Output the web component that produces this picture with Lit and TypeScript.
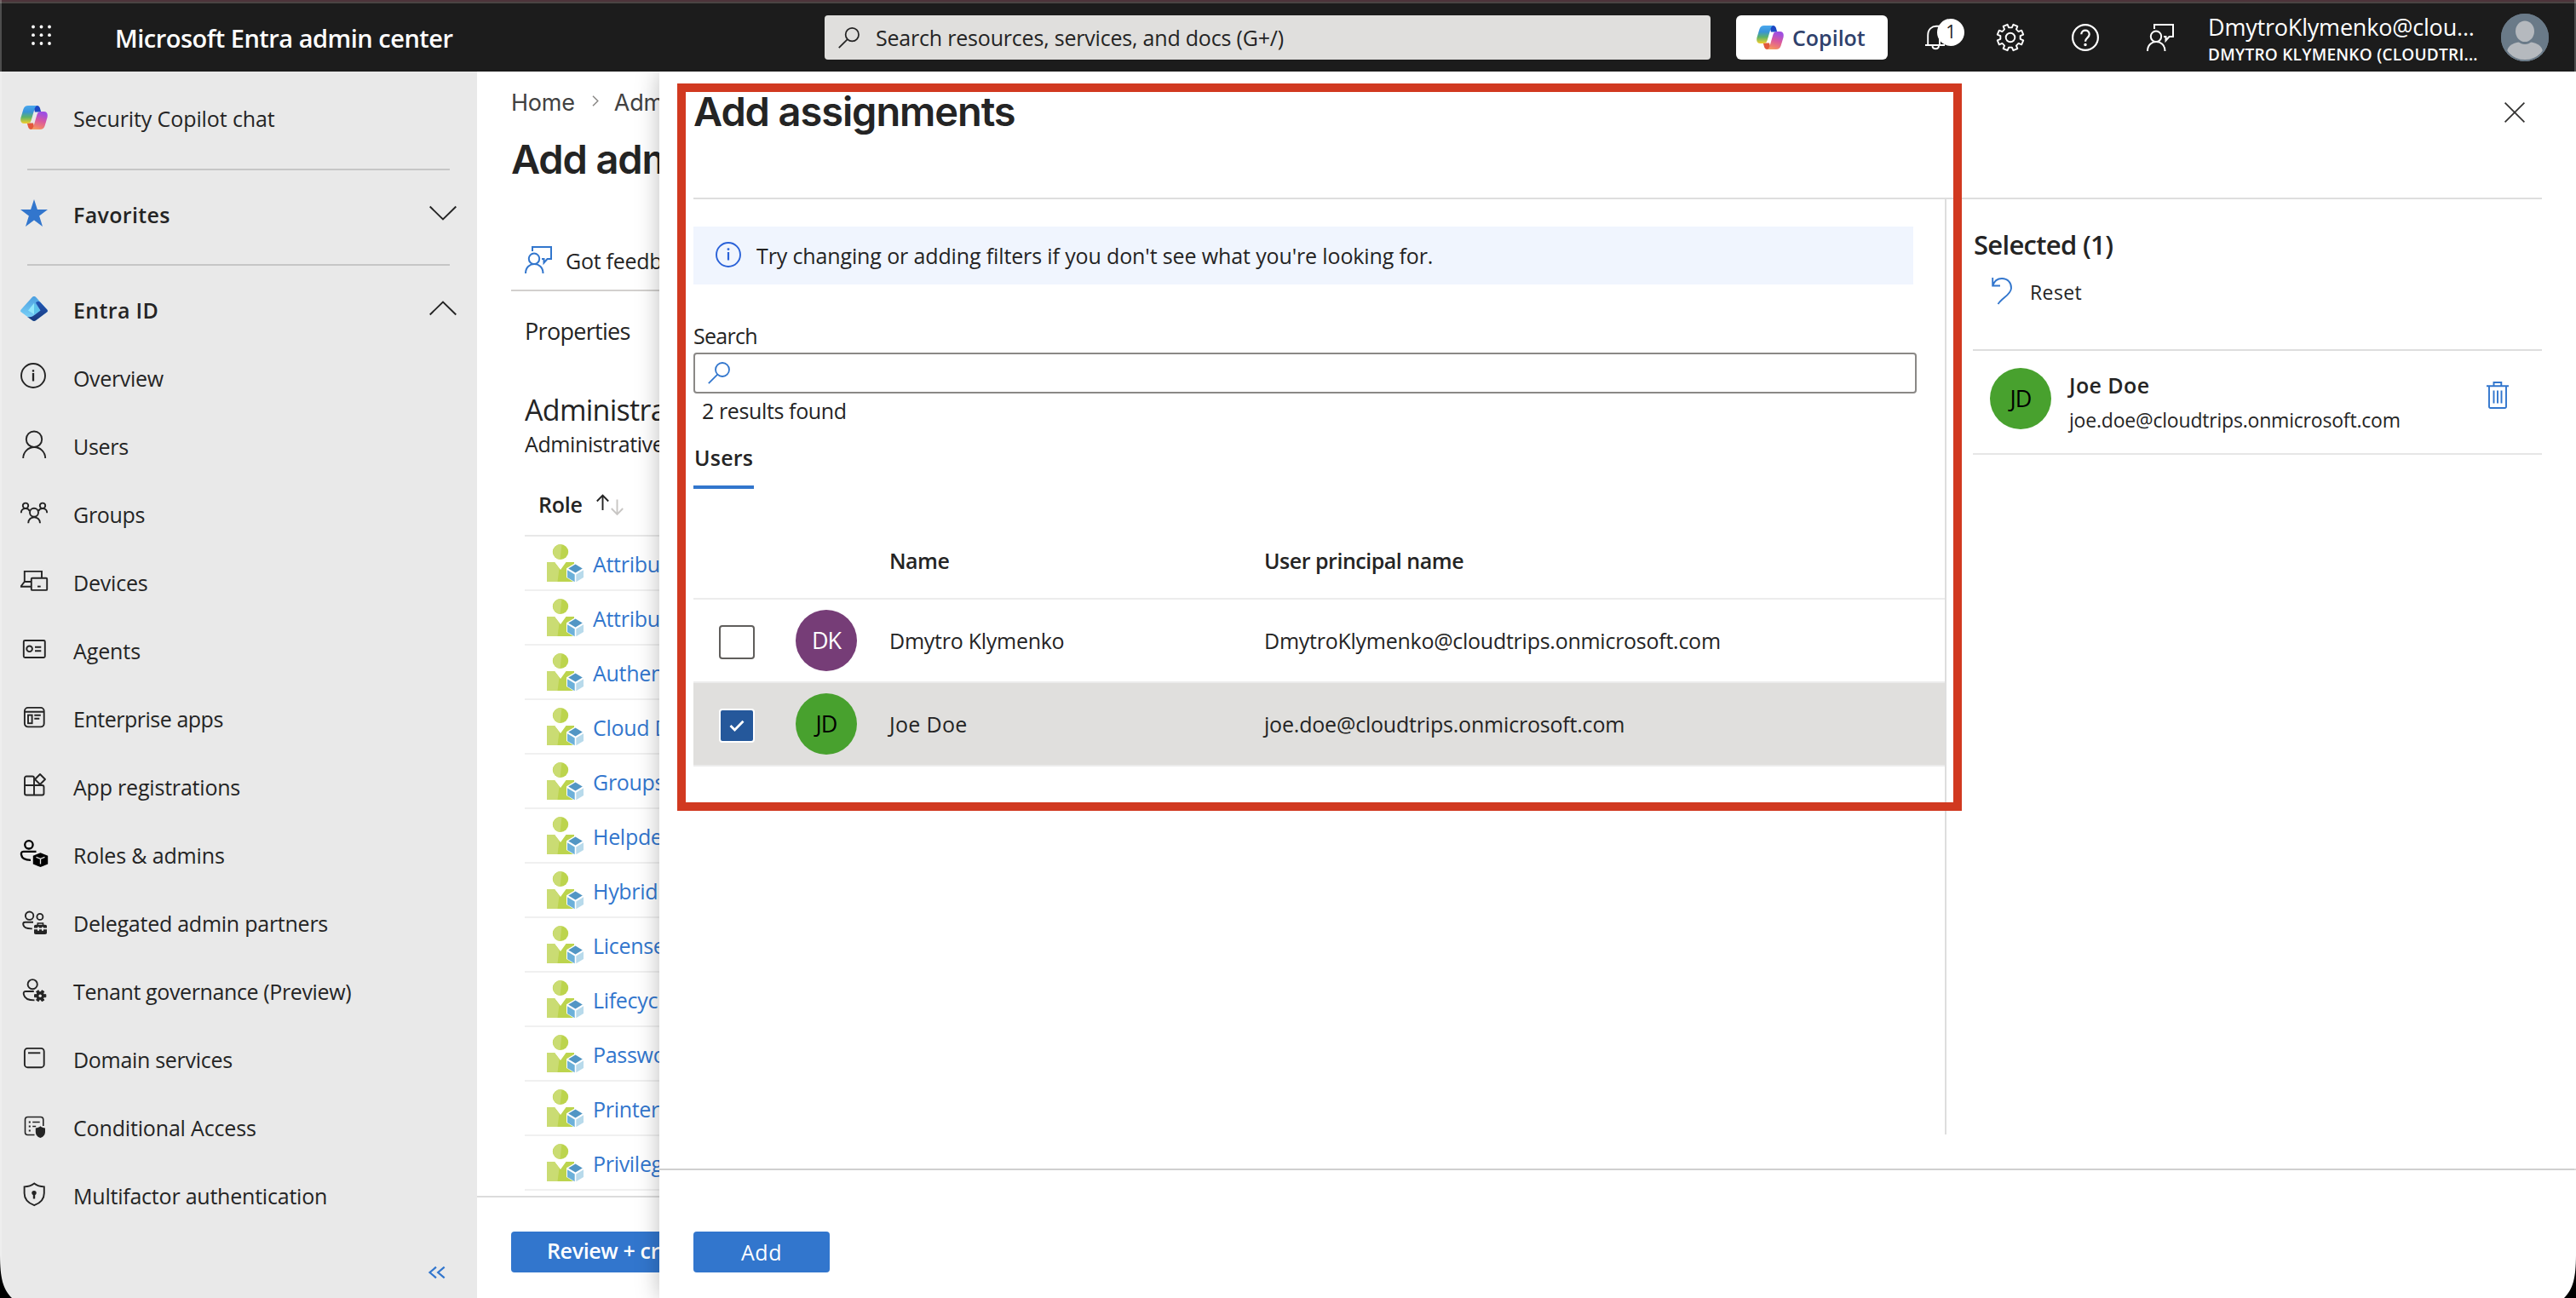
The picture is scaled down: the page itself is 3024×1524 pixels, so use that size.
import { LitElement, html, svg, css } from "lit";
import type { TemplateResult } from "lit";
import { customElement } from "lit/decorators.js";
import { styleMap } from "lit/directives/style-map.js";

/* ---------- icon helpers ---------- */

const icon = (w: number, h: number, body: unknown, cls = "") =>
  html`<svg class="icon ${cls}" width=${w} height=${h} viewBox="0 0 ${w} ${h}">${body}</svg>`;

/** Outline of a cog: `teeth` teeth between the root and outer radius. */
function cog(cx: number, cy: number, outer: number, root: number, teeth: number, phase: number): string {
  const pts: string[] = [];
  const step = 360 / teeth;
  for (let i = 0; i < teeth; i++) {
    const a = phase + i * step;
    const spec: [number, number][] = [
      [a - step * 0.3, root],
      [a - step * 0.22, outer],
      [a + step * 0.22, outer],
      [a + step * 0.3, root],
    ];
    for (const [deg, r] of spec) {
      const t = (deg * Math.PI) / 180;
      pts.push(`${(cx + r * Math.sin(t)).toFixed(2)} ${(cy - r * Math.cos(t)).toFixed(2)}`);
    }
  }
  return `M${pts.join("L")}Z`;
}

const copilotLogo = (id: string) =>
  icon(32, 28, svg`
    <defs>
      <linearGradient id="${id}-a" x1="0" y1="0" x2="0" y2="1">
        <stop offset="0" stop-color="#4aa8ee"/><stop offset=".35" stop-color="#3793d8"/>
        <stop offset=".65" stop-color="#5fb367"/><stop offset="1" stop-color="#f4cf2c"/>
      </linearGradient>
      <linearGradient id="${id}-b" x1=".3" y1="0" x2="0" y2="1">
        <stop offset="0" stop-color="#a04fe0"/><stop offset=".4" stop-color="#d9589f"/>
        <stop offset=".75" stop-color="#f0806f"/><stop offset="1" stop-color="#f6b05c"/>
      </linearGradient>
    </defs>
    <path d="M15 0h4.500c2 0 3 1.300 3.600 3.500L24.200 7.500H17z" fill="#1c48c4"/>
    <path d="M17 28h-4.500c-2 0-3-1.300-3.600-3.500L7.800 20.500H15z" fill="#e2593c"/>
    <path d="M9 0H20.500C18 0 17 2 16.200 5L12.700 17C11.800 20 10.500 21 8 21H4C1 21-.5 18 .5 14L3.500 4C4.500 1.500 6 0 9 0z" fill="url(#${id}-a)"/>
    <path d="M23 28H11.500C14 28 15 26 15.800 23L19.300 11C20.200 8 21.500 7 24 7H28C31 7 32.500 10 31.500 14L28.500 24C27.500 26.500 26 28 23 28z" fill="url(#${id}-b)"/>`);

const star = icon(32, 32, svg`<path d="M16 0l3.900 11.900H32l-9.900 7.500L26 32l-10-7.600L6 32l3.900-12.600L0 11.900h12.100z" fill="#3276cd"/>`);

const entraLogo = icon(32, 29, svg`
  <defs>
    <linearGradient id="en-l" x1="0" y1="0" x2="0" y2="1"><stop offset="0" stop-color="#4c9fe0"/><stop offset="1" stop-color="#7fd8fb"/></linearGradient>
    <linearGradient id="en-r" x1="0" y1="0" x2="0" y2="1"><stop offset="0" stop-color="#2257b5"/><stop offset="1" stop-color="#1a3a7d"/></linearGradient>
  </defs>
  <path d="M16 0c1 0 1.800.5 2.500 1.300L31.300 15.600c1 1.200.8 2.300-.3 3L18 28.200c-1.300.9-2.700.9-4 0L1 18.600c-1.100-.7-1.300-1.800-.3-3L13.500 1.300C14.200.5 15 0 16 0z" fill="url(#en-l)"/>
  <path d="M18 7.500c2-2.300 4.500-1.500 6 .2l7.300 7.900c1 1.200.8 2.300-.3 3L18 28.200c-1.300.9-2.700.9-4 0l-6-4.300c5 1 7.500-1.400 9-2.500l6.500-5z" fill="url(#en-r)"/>
  <path d="M16 8l7 8.400-7 4.600-7-4.600z" fill="#5cc4ea"/><path d="M16 8v13l-7-4.600z" fill="#90e6fb"/>`);

const feedback = (stroke: string) =>
  icon(32, 32, svg`<g fill="none" stroke=${stroke} stroke-width="2">
    <circle cx="11" cy="14.800" r="6.200"/><path d="M1 32c0-14.600 20.500-14.600 20.500 0"/>
    <path d="M9 6V1h22v14h-4.500l-4 4.500V15H20"/></g>`);

const chevron = (up: boolean) =>
  icon(32, 18, svg`<path d=${up ? "M.7 16.500L16 1.500l15.300 15" : "M.7 1.500L16 16.500l15.300-15"} fill="none" stroke="#242424" stroke-width="1.900"/>`);

const magnifier = (stroke: string, s: number) =>
  html`<svg class="icon" width=${s} height=${s} viewBox="0 0 26 26"><g fill="none" stroke=${stroke} stroke-width="1.800">
    <circle cx="17" cy="9" r="8"/><path d="M11.300 14.700L.8 25.200"/></g></svg>`;

const infoIcon = (stroke: string, s: number) =>
  html`<svg class="icon" width=${s} height=${s} viewBox="0 0 30 30"><circle cx="15" cy="15" r="14" fill="none" stroke=${stroke} stroke-width="1.900"/>
    <path d="M15 12v9.500" stroke=${stroke} stroke-width="2.200"/><circle cx="15" cy="8.600" r="1.400" fill=${stroke}/></svg>`;

const roleIcon = icon(43, 44, svg`
  <ellipse cx="16" cy="9" rx="9.200" ry="9" fill="#bcd44d"/>
  <path d="M17.500.1A9.200 9 0 1 0 15.500 18z" fill="#cadc73"/>
  <path d="M0 21h9l7 9 6.500-9H32v23H0z" fill="#bcd44d"/>
  <path d="M0 21h9l5.500 7.500L12.500 44H0z" fill="#cadc73"/>
  <path d="M33.500 22L44 28.300V39l-10.500 6.500L23 39V28.300z" fill="#fff"/>
  <path d="M33.500 23.500l8.300 5-8.300 5-8.300-5z" fill="#5296c4"/>
  <path d="M24 30.200l8.700 5.200V44.300L24 39z" fill="#6cb0d9"/>
  <path d="M43 30.200l-8.700 5.200V44.300L43 39z" fill="#b8daeb"/>`);

/* ---------- navigation data ---------- */

const k = "#242424";
const nav = (body: TemplateResult | unknown) =>
  icon(32, 32, svg`<g fill="none" stroke=${k} stroke-width="1.900">${body}</g>`, "nav-icon");

interface NavItem { label: string; tracking: number; glyph: TemplateResult; }

const NAV: NavItem[] = [
  { label: "Overview", tracking: -0.34, glyph: nav(svg`<circle cx="15" cy="13" r="14"/><path d="M15 10v9.500" stroke-width="2.300"/><path d="M15 6.200v2.400" stroke-width="2.300"/>`) },
  { label: "Users", tracking: -0.3, glyph: nav(svg`<circle cx="16" cy="7.700" r="9.200"/><path d="M3.200 30A12.800 12.800 0 0 1 29.200 30"/>`) },
  { label: "Groups", tracking: -0.3, glyph: nav(svg`<circle cx="16" cy="13.800" r="5"/><path d="M9.200 26.300C9.200 17 23 17 23 26.300"/>
      <circle cx="6" cy="5.800" r="3.200"/><circle cx="26" cy="5.800" r="3.200"/><path d="M.8 14.200C.8 8.500 8.500 7.200 10.800 12M31.200 14.200C31.200 8.500 23.500 7.200 21.200 12"/>`) },
  { label: "Devices", tracking: -0.2, glyph: nav(svg`<path d="M4.800 15V2.900H25v7.500M12.800 15H4.800L.9 20v.7H12.800"/><rect x="12.800" y="10.700" width="18.400" height="14.200" rx="1"/><path d="M20 20.600h3.700"/>`) },
  { label: "Agents", tracking: -0.1, glyph: nav(svg`<rect x="3.800" y="4" width="25" height="20" rx="1.500"/><circle cx="10.600" cy="13.800" r="3.300"/><path d="M17 11.700h7.300M17 16.200h7.300"/>`) },
  { label: "Enterprise apps", tracking: -0.48, glyph: nav(svg`<rect x="4.900" y="2.900" width="22.800" height="22.500" rx="4"/><path d="M5 7.800h22.600M16.300 11.800h7.500M16.300 15.800h6"/><rect x="9" y="11.600" width="4.600" height="9.600"/>`) },
  { label: "App registrations", tracking: -0.2, glyph: nav(svg`<path d="M16 14V5.500a2 2 0 0 0-2-2H7a2 2 0 0 0-2 2V23.500a2 2 0 0 0 2 2H25.500a2 2 0 0 0 2-2V16a2 2 0 0 0-2-2H5M16 14V25.500"/><path d="M23 1l6 6-6 6-6-6z" stroke-linejoin="round"/>`) },
  { label: "Roles & admins", tracking: -0.15, glyph: nav(svg`<g stroke="#000" stroke-width="2.300"><circle cx="9.900" cy="3.800" r="4.700"/><path d="M18.500 11.800H3.500C.8 11.800.8 14 1 15.500 1.600 20 6 21.800 12 21.800"/></g>
      <path d="M23.500 13.200l8.700 3.600v9.800l-8.700 3.500-8.700-3.500v-9.800z" fill="#000" stroke="none"/><path d="M18.500 18.300l5 2 5-2M23.500 20.300v6.200" stroke="#e9e9e9" stroke-width="1.300"/>`) },
  { label: "Delegated admin partners", tracking: -0.25, glyph: nav(svg`<circle cx="10.600" cy="7.200" r="4.700"/><circle cx="22.900" cy="8.400" r="3.500"/><path d="M15 14.800H5.500c-2.500 0-2.400 1.500-2.200 3C4 21.500 8 22.600 13.800 22.400"/>
      <path d="M16 21.500v-2c0-1 .8-1.800 2-1.800h11c1.200 0 2 .8 2 1.800v2h-4v-1h-2v1h-3v-1h-2v1zM16 23.300h4v1.500h2v-1.500h3v1.500h2v-1.500h4v4c0 1-.8 1.700-2 1.700H18c-1.200 0-2-.7-2-1.700z" fill=${k} stroke="none"/><path d="M20.300 18v-2h6.200v2" stroke-width="1.600"/>`) },
  { label: "Tenant governance (Preview)", tracking: -0.38, glyph: nav(svg`<circle cx="14.200" cy="7.700" r="5.600"/><path d="M15.800 16H6C3.500 16 3.500 18 3.900 19.700 5 24.800 10.500 26.400 16.500 26.400"/>
      <path d=${cog(23.2, 21.2, 6.8, 4.600, 6, 30)} fill=${k} stroke=${k} stroke-width="1"/><circle cx="23.200" cy="21.200" r="1.700" fill="#e9e9e9" stroke="none"/>`) },
  { label: "Domain services", tracking: -0.3, glyph: nav(svg`<rect x="4.900" y="2.900" width="22.800" height="22.300" rx="3.500"/><path d="M9 8.300h14.300"/>`) },
  { label: "Conditional Access", tracking: -0.16, glyph: nav(svg`<path d="M26.800 14V6.500a3 3 0 0 0-3-3H8.500a3 3 0 0 0-3 3V21.500a3 3 0 0 0 3 3H16.500" stroke-width="1.600"/><path d="M14.200 9.500h8.500M14.200 14.500h4" stroke-width="1.600"/>
      <path d="M9.800 9.500h2M9.800 14.500h2M9.800 19.500h2" stroke-width="2"/><path d="M23.400 14.300c1.600 1.400 3.400 2 5.600 2.200v4.300c0 3.800-2.200 6-5.600 7.300-3.400-1.300-5.600-3.500-5.600-7.300v-4.300c2.200-.2 4-.8 5.600-2.200z" fill=${k} stroke="none"/>`) },
  { label: "Multifactor authentication", tracking: -0.22, glyph: nav(svg`<path d="M16.200 1.500C19.500 4 23.500 5.200 27.800 5.400V13C27.800 20 23.500 24.500 16.200 27.200 8.900 24.500 4.600 20 4.600 13V5.400C8.900 5.200 12.900 4 16.200 1.500z"/><circle cx="16" cy="12.600" r="2.700" fill=${k} stroke="none"/><path d="M16 13v6.500" stroke-width="2.400"/>`) },
];

const ROLES = [
  "Attribute", "Attribute", "Authen", "Cloud D", "Groups", "Helpde",
  "Hybrid", "License", "Lifecyc", "Passwo", "Printer", "Privileg",
];

interface Person { initials: string; name: string; upn: string; tone: string; selected: boolean; }

const PEOPLE: Person[] = [
  { initials: "DK", name: "Dmytro Klymenko", upn: "DmytroKlymenko@cloudtrips.onmicrosoft.com", tone: "purple", selected: false },
  { initials: "JD", name: "Joe Doe", upn: "joe.doe@cloudtrips.onmicrosoft.com", tone: "green", selected: true },
];

/* ---------- shared styles ---------- */

const base = css`
  :host { display: block; box-sizing: border-box; font-family: "Open Sans", "Noto Sans", sans-serif; font-size: 25px; line-height: 40px; letter-spacing: -0.26px; color: #242424; }
  * { box-sizing: border-box; }
  .icon { display: block; flex: none; overflow: visible; }
  .avatar { width: 72px; height: 72px; border-radius: 50%; display: flex; align-items: center; justify-content: center; font-size: 27px; letter-spacing: -1px; flex: none; }
  .purple { background: #763d77; color: #fff; }
  .green { background: #48a12e; color: #000; }
  .primary { height: 48px; border-radius: 4px; background: #3276cd; color: #fff; font-weight: 600; display: flex; align-items: center; white-space: nowrap; }
`;

/* ---------- top bar ---------- */

@customElement("top-bar")
export class TopBar extends LitElement {
  static styles = [base, css`
    :host { height: 84px; background: #1c1c1c; border-top: 2px solid #4d343a; color: #fff; }
    .bar { height: 82px; border-top: 2px solid #4a4443; display: flex; align-items: center; padding-left: 36px; }
    .title { width: 831px; padding-left: 75px; font-size: 29px; font-weight: 600; letter-spacing: -0.5px; padding-top: 2px; }
    .waffle { margin-top: -6px; }
    .brand { display: flex; align-items: center; width: 932px; }
    .search { width: 1040px; height: 52px; border-radius: 4px; background: #e0dfdd; color: #242424; display: flex; align-items: center; gap: 19px; padding-left: 16px; letter-spacing: -0.2px; }
    .copilot { width: 178px; height: 52px; margin-left: 30px; border-radius: 6px; background: #fff; color: #2f416c; font-weight: 600; letter-spacing: 0; display: flex; align-items: center; gap: 10px; padding-left: 24px; }
    .tools { display: flex; align-items: center; margin-left: 44px; gap: 56px; }
    .bell { position: relative; width: 46px; height: 32px; margin-right: -18px; }
    .badge { position: absolute; left: 14px; top: -6px; width: 32px; height: 32px; border-radius: 50%; background: #fff; color: #242424; font-size: 21px; line-height: 31px; text-align: center; }
    .user { margin-left: 40px; width: 344px; padding-top: 7px; }
    .mail { font-size: 27px; line-height: 32px; letter-spacing: -0.2px; }
    .tenant { font-size: 19px; font-weight: 600; line-height: 32px; letter-spacing: 0.25px; white-space: nowrap; }
  `];

  render() {
    const dots = [2, 11.5, 21].flatMap((x) => [1.5, 11.2, 21].map((y) => svg`<circle cx=${x + 1} cy=${y + 1} r="1.900" fill="#fff"/>`));
    return html`<div class="bar">
      <div class="brand">
        ${icon(24, 24, dots, "waffle")}
        <div class="title">Microsoft Entra admin center</div>
      </div>
      <div class="search">${magnifier("#242424", 25)}<span>Search resources, services, and docs (G+/)</span></div>
      <div class="copilot">${copilotLogo("top")}<span>Copilot</span></div>
      <div class="tools">
        <div class="bell">
          ${icon(46, 32, svg`<g fill="none" stroke="#fff" stroke-width="1.900"><path d="M3.200 25V13.500C3.200 6 8 2.800 13 2.800h4V25M0 25h23"/><path d="M8.500 25.500c0 5 7.500 5 7.500 0"/></g>`)}
          <div class="badge">1</div>
        </div>
        ${icon(32, 32, svg`<g fill="none" stroke="#fff" stroke-width="1.900" stroke-linejoin="round"><path d=${cog(16, 16, 15.600, 11.800, 8, 22.5)}/><circle cx="16" cy="16" r="5.300"/></g>`)}
        ${icon(32, 32, svg`<g fill="none" stroke="#fff" stroke-width="2.200"><circle cx="16" cy="16" r="14.900"/><path d="M11.300 12.300c0-6.200 9.400-6.200 9.400 0 0 4-4.700 4.200-4.700 8.500"/><circle cx="16" cy="24.500" r="1" fill="#fff" stroke-width="1.500"/></g>`)}
        ${feedback("#fff")}
      </div>
      <div class="user"><div class="mail">DmytroKlymenko@clou...</div><div class="tenant">DMYTRO KLYMENKO (CLOUDTRI...</div></div>
      ${icon(56, 56, svg`<clipPath id="face"><circle cx="28" cy="28" r="28"/></clipPath><g clip-path="url(#face)"><rect width="56" height="56" fill="#6a7a88"/>
        <path d="M7 56V46c0-9 8-13 21-13s21 4 21 13v10z" fill="#b5b9be"/><ellipse cx="28" cy="21.500" rx="12.500" ry="14.500" fill="#6a7a88"/><ellipse cx="28" cy="20.800" rx="11" ry="12.300" fill="#b5b9be"/></g>
        <circle cx="28" cy="28" r="27" fill="none" stroke="#6a7a88" stroke-width="2"/>`)}
    </div>`;
  }
}

/* ---------- left navigation ---------- */

@customElement("side-nav")
export class SideNav extends LitElement {
  static styles = [base, css`
    :host { width: 560px; flex: none; background: #e9e9e9; padding-top: 14px; }
    .row { height: 80px; display: flex; align-items: center; padding: 0 24px 0 24px; gap: 30px; }
    .top { height: 82px; letter-spacing: -0.1px; }
    .top .shift { margin-top: -2px; }
    .link span { margin-top: -1px; }
    .head { font-weight: 600; letter-spacing: 0.35px; }
    .head .grow { flex: 1; }
    .shift { margin-top: -4px; }
    hr { border: 0; height: 2px; background: #c6c6c6; margin: 18px 32px 12px; }
    .collapse { padding: 43px 0 0 503px; }
  `];

  render() {
    return html`
      <div class="row top"><div class="shift">${copilotLogo("nav")}</div><span>Security Copilot chat</span></div>
      <hr />
      <div class="row head"><div class="shift">${star}</div><span class="grow">Favorites</span><div class="shift">${chevron(false)}</div></div>
      <hr />
      <div class="row head"><div class="shift">${entraLogo}</div><span class="grow">Entra ID</span><div class="shift">${chevron(true)}</div></div>
      ${NAV.map((n) => html`<div class="row link">${n.glyph}<span style=${styleMap({ letterSpacing: `${n.tracking}px` })}>${n.label}</span></div>`)}
      <div class="collapse">${icon(20, 14, svg`<path d="M9 .7L1.500 7 9 13.300M18.700.7L11.200 7l7.500 6.300" fill="none" stroke="#3276cd" stroke-width="2.200"/>`)}</div>
    `;
  }
}

/* ---------- page behind the panel ---------- */

@customElement("role-page")
export class RolePage extends LitElement {
  static styles = [base, css`
    :host { width: 214px; flex: none; overflow: hidden; display: flex; flex-direction: column; background: #fff; white-space: nowrap; }
    .crumbs { margin: 17px 0 0 40px; font-family: Inter, sans-serif; font-size: 27px; letter-spacing: -0.2px; color: #424242; display: flex; overflow: hidden; }
    .crumbs .icon { margin: 11px 18px 0 20px; }
    h1 { margin: 16px 0 0 40px; font: 600 47px/60px Inter, sans-serif; letter-spacing: -1.15px; overflow: hidden; }
    .commands { margin: 55px 0 0 40px; padding-left: 16px; height: 70px; border-bottom: 2px solid #d2d0ce; display: flex; align-items: center; gap: 16px; overflow: hidden; }
    .commands .icon { margin-top: -3px; }
    .commands span { margin-top: -1px; }
    .tab { margin: 27px 0 0 56px; font-size: 27px; letter-spacing: -0.7px; }
    h2 { margin: 50px 0 0 56px; font-size: 34px; line-height: 44px; font-weight: 400; letter-spacing: -0.7px; overflow: hidden; }
    .note { margin-left: 56px; line-height: 36px; letter-spacing: -0.4px; overflow: hidden; }
    .table { margin: 17px 0 0 56px; height: 848px; overflow: hidden; }
    .th { height: 74px; padding-left: 16px; border-bottom: 2px solid #e8e8e8; font-weight: 600; display: flex; align-items: center; gap: 16px; }
    .th .icon { margin-top: 1px; }
    .tr { height: 64px; padding-left: 26px; border-bottom: 2px solid #f0f0f0; display: flex; align-items: center; gap: 11px; color: #3276cd; }
    .tr span { flex: 1; min-width: 0; padding-top: 2px; letter-spacing: -0.3px; overflow: hidden; }
    .foot { height: 120px; border-top: 2px solid #dcdcdc; padding: 40px 0 0 40px; overflow: hidden; }
    .primary { width: 280px; padding: 0 0 5px 42px; letter-spacing: -0.35px; }
  `];

  render() {
    return html`
      <div class="crumbs"><span>Home</span>${icon(8, 13, svg`<path d="M1 .7l5.800 5.800L1 12.300" fill="none" stroke="#8a8886" stroke-width="1.500"/>`)}<span>Adm</span></div>
      <h1>Add adm</h1>
      <div class="commands">${feedback("#3276cd")}<span>Got feedb</span></div>
      <div class="tab">Properties</div>
      <h2>Administra</h2>
      <div class="note">Administrative</div>
      <div class="table">
        <div class="th"><span>Role</span>${icon(34, 26, svg`<path d="M7.500 19V2M.8 8.500L7.500 1.500l6.700 7" fill="none" stroke="#242424" stroke-width="1.900"/><path d="M24.500 6.500V23.500M17.800 17l6.700 7 6.700-7" fill="none" stroke="#c8c6c4" stroke-width="1.900"/>`)}</div>
        ${ROLES.map((r) => html`<div class="tr">${roleIcon}<span>${r}</span></div>`)}
      </div>
      <div class="foot"><div class="primary">Review + cr</div></div>
    `;
  }
}

/* ---------- assignment panel ---------- */

@customElement("assign-panel")
export class AssignPanel extends LitElement {
  static styles = [base, css`
    :host { flex: 1; min-width: 0; z-index: 1; background: #fff; display: flex; flex-direction: column; box-shadow: 0 0 26px rgba(0, 0, 0, 0.26); }
    .head { height: 150px; margin: 0 40px; border-bottom: 2px solid #dedede; display: flex; justify-content: space-between; padding: 17px 20px 0 0; }
    h1 { margin: 0; font: 600 47px/60px Inter, sans-serif; letter-spacing: -1.1px; }
    .head .icon { margin-top: 19px; }
    .body { flex: 1; display: flex; margin: 0 40px; }
    .list { width: 1471px; height: 1098px; border-right: 2px solid #dedede; padding-top: 32px; }
    .info { width: 1432px; height: 68px; background: #f0f5fe; display: flex; align-items: center; gap: 18px; padding-left: 26px; letter-spacing: -0.13px; }
    .info .icon { margin-top: -3px; }
    .label { margin-top: 40px; letter-spacing: -0.7px; }
    .input { width: 1436px; height: 48px; border: 2px solid #8a8886; border-radius: 4px; display: flex; align-items: center; padding-left: 15px; }
    .count { padding-left: 10px; letter-spacing: -0.38px; }
    .tab { margin-top: 15px; width: 71px; padding: 0 0 13px 1px; border-bottom: 4px solid #3276cd; font-weight: 600; letter-spacing: 0.2px; }
    .row { display: grid; grid-template-columns: 120px 110px 440px 1fr; align-items: center; height: 98px; border-bottom: 2px solid #ececec; }
    .names { height: 130px; padding-top: 40px; font-weight: 600; letter-spacing: -0.48px; }
    .on { background: #e0dfdd; }
    .on span { letter-spacing: -0.2px; }
    .box { width: 42px; height: 40px; margin: 4px 0 0 30px; border: 2px solid #605e5c; border-radius: 4px; background: #fff; display: flex; align-items: center; justify-content: center; }
    .on .box { border-color: #fff; background: #25589b; }
    .on .name { letter-spacing: 0.3px; }
    .side { width: 699px; padding: 31px 0 0 31px; flex: none; }
    h2 { margin: 0; padding-left: 1px; font-size: 31px; line-height: 44px; font-weight: 600; letter-spacing: -0.7px; }
    .reset { margin: 12px 0 45px; height: 44px; display: flex; align-items: center; gap: 21px; padding-left: 22px; font-size: 23px; letter-spacing: 0.4px; }
    .reset .icon { margin-top: -3px; }
    .card { height: 124px; border-top: 2px solid #dedede; border-bottom: 2px solid #e6e6e6; display: flex; align-items: flex-start; padding: 20px 39px 0 20px; gap: 21px; }
    .who { flex: 1; }
    .who b { display: block; font-weight: 600; letter-spacing: 0.4px; }
    .who span { display: block; font-size: 23px; line-height: 42px; letter-spacing: -0.2px; }
    .card > .icon { margin-top: 16px; }
    .foot { height: 152px; border-top: 2px solid #cfcfcf; padding: 72px 0 0 40px; }
    .primary { width: 160px; justify-content: center; font-weight: 500; letter-spacing: 0.5px; }
  `];

  render() {
    return html`
      <div class="head">
        <h1>Add assignments</h1>
        ${icon(24, 24, svg`<path d="M.6.6l22.800 22.800M23.400.6L.6 23.400" stroke="#323130" stroke-width="1.700"/>`)}
      </div>
      <div class="body">
        <div class="list">
          <div class="info">${infoIcon("#2a62d8", 30)}<span>Try changing or adding filters if you don't see what you're looking for.</span></div>
          <div class="label">Search</div>
          <div class="input">${magnifier("#3276cd", 26)}</div>
          <div class="count">2 results found</div>
          <div class="tab">Users</div>
          <div class="row names"><span></span><span></span><span>Name</span><span>User principal name</span></div>
          ${PEOPLE.map((p) => html`<div class="row ${p.selected ? "on" : ""}">
            <div class="box">${p.selected ? icon(18, 14, svg`<path d="M1.500 7l5 5L16.500 1.800" fill="none" stroke="#fff" stroke-width="2.800"/>`) : ""}</div>
            <div class="avatar ${p.tone}">${p.initials}</div>
            <span class="name">${p.name}</span><span>${p.upn}</span>
          </div>`)}
        </div>
        <div class="side">
          <h2>Selected (1)</h2>
          <div class="reset">${icon(24, 32, svg`<path d="M1.200 0v9.500H10M1.200 9.500C3 4 7 1 12 1c7 0 11.300 5 11 11.500C22.500 20 13 23 7.500 31" fill="none" stroke="#3276cd" stroke-width="1.900"/>`)}<span>Reset</span></div>
          <div class="card">
            <div class="avatar green">JD</div>
            <div class="who"><b>Joe Doe</b><span>joe.doe@cloudtrips.onmicrosoft.com</span></div>
            ${icon(26, 32, svg`<g fill="none" stroke="#3276cd" stroke-width="1.900"><path d="M0 5.300h26M8.500 5V1h8.800v4M3 5.500V29.500a1.500 1.500 0 0 0 1.500 1.500h17a1.500 1.500 0 0 0 1.500-1.500V5.500M8.500 10.500v15M13 10.500v15M17.500 10.500v15"/></g>`)}
          </div>
        </div>
      </div>
      <div class="foot"><div class="primary">Add</div></div>
    `;
  }
}

/* ---------- root ---------- */

@customElement("app-root")
export class AppRoot extends LitElement {
  static styles = [base, css`
    :host { width: 3024px; height: 1524px; position: relative; overflow: hidden; background: #fff; }
    .main { display: flex; height: 1440px; overflow: hidden; }
    .frame { position: absolute; z-index: 2; left: 795px; top: 98px; width: 1508px; height: 854px; border: 10px solid #d13920; }
    .edge { position: absolute; z-index: 2; top: 0; bottom: 0; width: 2px; background: rgba(255, 255, 255, 0.22); }
    .left { left: 0; }
    .right { right: 0; }
    .corner { position: absolute; z-index: 2; bottom: 0; }
  `];

  render() {
    return html`
      <top-bar></top-bar>
      <div class="main">
        <side-nav></side-nav>
        <role-page></role-page>
        <assign-panel></assign-panel>
      </div>
      <div class="frame"></div>
      <div class="edge left"></div>
      <div class="edge right"></div>
      <div class="corner left">${icon(14, 50, svg`<path d="M0 0C.3 26 3 39 14 50H0z" fill="#000"/>`)}</div>
      <div class="corner right">${icon(14, 50, svg`<path d="M14 0C13.700 26 11 39 0 50H14z" fill="#000"/>`)}</div>
    `;
  }
}
